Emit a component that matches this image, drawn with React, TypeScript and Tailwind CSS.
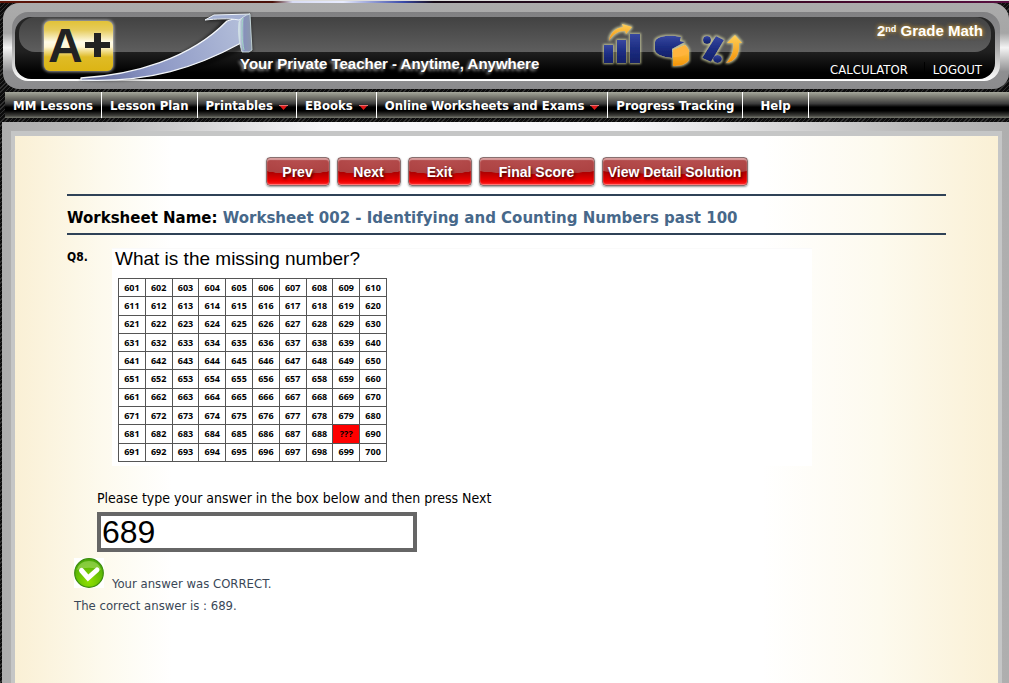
const navItems = [
  { label: 'MM Lessons', menu: false },
  { label: 'Lesson Plan', menu: false },
  { label: 'Printables', menu: true },
  { label: 'EBooks', menu: true },
  { label: 'Online Worksheets and Exams', menu: true },
  { label: 'Progress Tracking', menu: false },
  { label: 'Help', menu: false },
]

const buttons = [
  { label: 'Prev', width: 'w-16' },
  { label: 'Next', width: 'w-16' },
  { label: 'Exit', width: 'w-16' },
  { label: 'Final Score', width: 'w-29' },
  { label: 'View Detail Solution', width: 'w-[146px]' },
]

const MISSING = 689

const Logo = () => (
  <svg width="240" height="62" viewBox="15 17 240 62" className="shrink-0 overflow-visible" role="img" aria-label="A+">
    <defs>
      <linearGradient id="gold" x1="0" y1="0" x2="0" y2="1">
        <stop offset="0" stopColor="#e2c238" />
        <stop offset="0.18" stopColor="#e6cc5c" />
        <stop offset="0.42" stopColor="#fffbe8" />
        <stop offset="0.52" stopColor="#fff6d4" />
        <stop offset="0.72" stopColor="#dfbb26" />
        <stop offset="1" stopColor="#dcb414" />
      </linearGradient>
      <linearGradient id="swoosh" x1="80" y1="80" x2="245" y2="20" gradientUnits="userSpaceOnUse">
        <stop offset="0" stopColor="#5c6496" />
        <stop offset="0.4" stopColor="#8b96c4" />
        <stop offset="1" stopColor="#b4bfda" />
      </linearGradient>
      <linearGradient id="fold" x1="238" y1="0" x2="252" y2="0" gradientUnits="userSpaceOnUse">
        <stop offset="0" stopColor="#e3f2f2" />
        <stop offset="0.45" stopColor="#8791ba" />
        <stop offset="1" stopColor="#8c9aac" />
      </linearGradient>
      <filter id="glow" x="-20%" y="-20%" width="140%" height="140%">
        <feGaussianBlur stdDeviation="1.5" />
      </filter>
    </defs>
    <rect x="43" y="20" width="71" height="52" rx="7" fill="#fff" opacity="0.6" filter="url(#glow)" />
    <rect x="44" y="21" width="69" height="50" rx="6" fill="url(#gold)" />
    <text x="48" y="62" fontFamily="'Liberation Sans', Arial, sans-serif" fontWeight="700" fontSize="48" fill="#222">A</text>
    <path d="M94 33h7v9h9v6h-9v9h-7v-9h-9v-6h9z" fill="#222" />
    <path d="M80 77C130 76 190 59 222 21L205 21L214 14L250 13L253 52L242 50C205 70 150 85 80 80z" fill="#000" opacity="0.5" filter="url(#glow)" />
    <path d="M81 78C133 75 190 59 227 21L243 16L241 43C197 67 150 83 81 80z" fill="url(#swoosh)" stroke="#f4f7fb" strokeWidth="1.300" strokeLinejoin="round" />
    <path d="M205 20L214 15L250 14L239 20C228 18 216 19 205 20z" fill="#a4b0d2" stroke="#f0f5fa" strokeWidth="1" strokeLinejoin="round" />
    <path d="M250 14C245 15 241 18 239 22C238 33 239 43 242 52L249 52L252 50C251 38 251 26 250 14z" fill="url(#fold)" stroke="#d7e8e8" strokeWidth="0.800" />
    <path d="M243 18C241 31 242 41 244 50" fill="none" stroke="#9ed5c5" strokeWidth="1" />
  </svg>
)

const HeaderIcons = () => (
  <svg width="142" height="48" viewBox="602 21 142 48" className="shrink-0 overflow-visible" aria-hidden="true">
    <defs>
      <linearGradient id="navy" x1="0" y1="0" x2="0" y2="1">
        <stop offset="0" stopColor="#3848a0" />
        <stop offset="0.5" stopColor="#1d2e83" />
        <stop offset="1" stopColor="#122068" />
      </linearGradient>
      <linearGradient id="orange" x1="0" y1="0" x2="0" y2="1">
        <stop offset="0" stopColor="#ffd05a" />
        <stop offset="1" stopColor="#f39306" />
      </linearGradient>
      <filter id="halo" x="-20%" y="-20%" width="150%" height="150%">
        <feMorphology in="SourceAlpha" operator="dilate" radius="1" result="d" />
        <feGaussianBlur in="d" stdDeviation="0.9" result="b" />
        <feFlood floodColor="#dfe0a8" floodOpacity="0.75" />
        <feComposite in2="b" operator="in" result="g" />
        <feMerge>
          <feMergeNode in="g" />
          <feMergeNode in="SourceGraphic" />
        </feMerge>
      </filter>
    </defs>
    <g filter="url(#halo)">
      <rect x="605" y="45" width="9" height="18" fill="url(#navy)" />
      <rect x="618" y="40" width="9" height="23" fill="url(#navy)" />
      <rect x="631" y="34" width="10" height="29" fill="url(#navy)" />
      <path d="M610 41C611 32 617 28 624 27L623 24L633 27L627 34L626 31C619 31 614 34 610 41z" fill="url(#orange)" />
    </g>
    <g filter="url(#halo)">
      <path d="M656 42C656 37 668 34 682 37L681 41L686 42L673 49L673 58C663 57 656 54 656 50z" fill="url(#navy)" />
      <path d="M674 50L686 45C689 48 690 50 690 53L690 60C687 65 681 66 674 66z" fill="url(#orange)" />
      <path d="M674 50L686 45C689 48 690 50 690 52C686 56 681 57 674 57z" fill="#ffb43c" />
    </g>
    <g filter="url(#halo)">
      <circle cx="708" cy="40" r="4" fill="url(#navy)" />
      <path d="M717 36L725 40L712 62L703 58z" fill="url(#navy)" />
      <ellipse cx="718.500" cy="59" rx="4.500" ry="4" fill="url(#navy)" />
      <path d="M727 63C733 57 735 49 734 43L728 43L736 35L743 43L740 43C741 53 737 62 727 63z" fill="url(#orange)" />
    </g>
  </svg>
)

const Header = () => (
  <header className="ml-[3px] rounded-2xl bg-[linear-gradient(to_bottom,#ababab,#a6a6a6_35%,#f4f4f4_52%,#c8c8c8_64%,#8f8f91_80%,#8b8b8d)] p-[9px] pb-2">
    <div className="rounded-2xl bg-[linear-gradient(to_bottom,#808082,#8a8a8c_30%,#b0b0b0_55%,#fff)] pt-[5px] pr-[5px] pb-[2px] pl-[3px]">
      <div className="relative flex h-[62px] items-stretch overflow-visible rounded-2xl bg-[linear-gradient(to_bottom,#262626,#202020_56%,#000_90%)] pr-3">
        <div className="absolute inset-x-1 top-0 h-[35px] rounded-2xl bg-linear-to-b from-[#424242] to-[#5e5e5e]" />
        <div className="relative flex flex-1">
          <Logo />
          <p className="-ml-[15px] self-end pb-[5px] text-[15px] leading-5 font-bold whitespace-nowrap text-white [text-shadow:-2px_2px_3px_#999]">
            Your Private Teacher - Anytime, Anywhere
          </p>
          <div className="ml-auto pt-1 pr-[87px]">
            <HeaderIcons />
          </div>
        </div>
        <div className="relative flex flex-col items-end justify-between pt-1 pb-px">
          <p className="text-[15px] leading-5 font-bold text-white [text-shadow:0_0_4px_#c49a45,0_0_4px_#a37b2c]">
            2<sup className="text-[9px]">nd</sup> Grade Math
          </p>
          <div className="flex items-center pr-px font-['DejaVu_Sans_Condensed','DejaVu_Sans',sans-serif] text-[13px] leading-4 text-white">
            <a href="#calculator" className="border-r border-black pr-4">CALCULATOR</a>
            <a href="#logout" className="pl-2">LOGOUT</a>
          </div>
        </div>
      </div>
    </div>
  </header>
)

const Nav = () => (
  <nav className="mt-[3px] mb-1 ml-[5px] flex h-[26px] bg-[linear-gradient(to_bottom,#a5a79b,#77776f_20%,#3c3c3c_45%,#000_58%,#000_72%,#3c3c38_90%,#77796f)] font-['DejaVu_Sans_Condensed','DejaVu_Sans',sans-serif] text-[13px] font-bold text-white">
    {navItems.map((item) => (
      <a
        key={item.label}
        href="#nav"
        className={`flex items-center gap-1.5 border-r border-white pt-px whitespace-nowrap ${item.label === 'Help' ? 'px-[17px]' : 'px-2'}`}
      >
        {item.label}
        {item.menu && (
          <svg width="9" height="5" viewBox="0 0 9 5" className="mt-[3px]" aria-hidden="true">
            <path d="M0 0h9L4.500 5z" fill="#e01818" />
            <path d="M0 0.500h9" stroke="#e87070" />
          </svg>
        )}
      </a>
    ))}
  </nav>
)

const NumberGrid = () => (
  <table className="mt-[9px] ml-[6px] h-[184px] w-[269px] table-fixed border-collapse text-center font-['Open_Sans',sans-serif] text-[9px] leading-3 font-bold text-black">
    <tbody>
      {Array.from({ length: 10 }, (_, row) => (
        <tr key={row}>
          {Array.from({ length: 10 }, (_, col) => {
            const n = 601 + row * 10 + col
            return (
              <td key={n} className={`border border-[#555] p-0 ${n === MISSING ? 'bg-[#fe0000]' : ''}`}>
                {n === MISSING ? '???' : n}
              </td>
            )
          })}
        </tr>
      ))}
    </tbody>
  </table>
)

const CheckIcon = () => (
  <svg width="30" height="30" viewBox="0 0 30 30" className="shrink-0 bg-white" aria-hidden="true">
    <defs>
      <radialGradient id="green" cx="0.5" cy="0.8" r="0.7">
        <stop offset="0" stopColor="#8fe000" />
        <stop offset="1" stopColor="#4fac08" />
      </radialGradient>
    </defs>
    <circle cx="15" cy="15" r="14.300" fill="url(#green)" stroke="#3b8c0c" strokeWidth="1.200" />
    <path d="M3 12C5 0 25 0 27 12C20 9 10 9 3 12z" fill="#a6dc62" opacity="0.600" />
    <path d="M7.500 12.500L14 20L23 12" fill="none" stroke="#fff" strokeWidth="5" strokeLinecap="round" />
  </svg>
)

const Worksheet = () => (
  <main className="flex-1 border-x-4 border-t-[5px] border-[#c5c6c6] bg-[linear-gradient(to_right,#faf0d5,#fdfaee_9%,#fff_16%,#fff_76%,#fdfaee_88%,#faf0d5)] px-[52px] pt-[21px] pb-10">
    <div className="mb-2 flex flex-wrap justify-center gap-[7px]">
      {buttons.map((b) => (
        <button
          key={b.label}
          type="button"
          className={`${b.width} h-[29px] rounded-[4px] border border-[#887070] bg-[radial-gradient(ellipse_90%_60%_at_50%_0,#b85050_0,#ac4242_98%,transparent_100%),linear-gradient(to_bottom,#8c0808,#a80000_50%,#ee0000_85%,#ff2020)] text-[14px] leading-5 font-bold whitespace-nowrap text-white shadow-[inset_0_2px_1px_#d8a0a0,inset_0_-1px_1px_#ff8080,0_1px_2px_#999] [text-shadow:1px_2px_3px_#400]`}
        >
          {b.label}
        </button>
      ))}
    </div>
    <h1 className="border-y-2 border-[#2f4257] pt-3 pb-[5px] font-['DejaVu_Sans',sans-serif] text-[15px] leading-5 font-bold text-black">
      Worksheet Name: <span className="text-[#47688a]">Worksheet 002 - Identifying and Counting Numbers past 100</span>
    </h1>
    <section className="mt-[13px] flex font-['DejaVu_Sans_Condensed','DejaVu_Sans',sans-serif]">
      <h2 className="w-[45px] shrink-0 pt-px text-[12px] leading-4 font-bold text-black">Q8.</h2>
      <div className="w-[700px] border-t border-[#fafafa] bg-white pb-1 font-['Liberation_Sans',Arial,sans-serif]">
        <p className="pl-[3px] text-[19px] leading-5 text-black">What is the missing number?</p>
        <NumberGrid />
      </div>
    </section>
    <form className="mt-[22px] ml-[30px] font-['DejaVu_Sans_Condensed','DejaVu_Sans',sans-serif]">
      <label htmlFor="answer" className="block text-[14px] leading-5 text-black">
        Please type your answer in the box below and then press Next
      </label>
      <input
        id="answer"
        type="text"
        defaultValue="689"
        className="mt-1 block h-10 w-80 max-w-full border-4 border-[#666] bg-white px-px font-['Liberation_Sans',Arial,sans-serif] text-[32px] leading-8 text-black"
      />
    </form>
    <div className="mt-[6px] ml-[7px] font-['DejaVu_Sans_Condensed','DejaVu_Sans',sans-serif] text-[13px] leading-4 text-[#3a4757]">
      <p className="flex items-baseline gap-2">
        <CheckIcon />
        <span>Your answer was CORRECT.</span>
      </p>
      <p className="mt-[6px]">The correct answer is : 689.</p>
    </div>
  </main>
)

const App = () => {
  return (
    <div className="flex min-h-screen flex-col bg-[repeating-linear-gradient(135deg,#0c0c0c_0,#0c0c0c_2px,#303030_2px,#303030_3px)] font-['Liberation_Sans',Arial,sans-serif]">
      <div className="h-[3px] border-t border-[#ddd] bg-[linear-gradient(to_right,#5c1408,#4a1008_27%,#d8dcf4_29%,#e8ecff_34%,#3848a8_40%,#180c18_43%,#400828_80%,#581040)]" />
      <Header />
      <Nav />
      <div className="ml-[2px] flex flex-1 flex-col bg-[linear-gradient(to_right,#aeaeae,#bbb_10%,#f8f8fa_32%,#f8f8fa_62%,#bbb_90%,#aeaeae)] pt-[9px] pr-[7px] pl-[9px]">
        <Worksheet />
      </div>
    </div>
  )
}

export default App
